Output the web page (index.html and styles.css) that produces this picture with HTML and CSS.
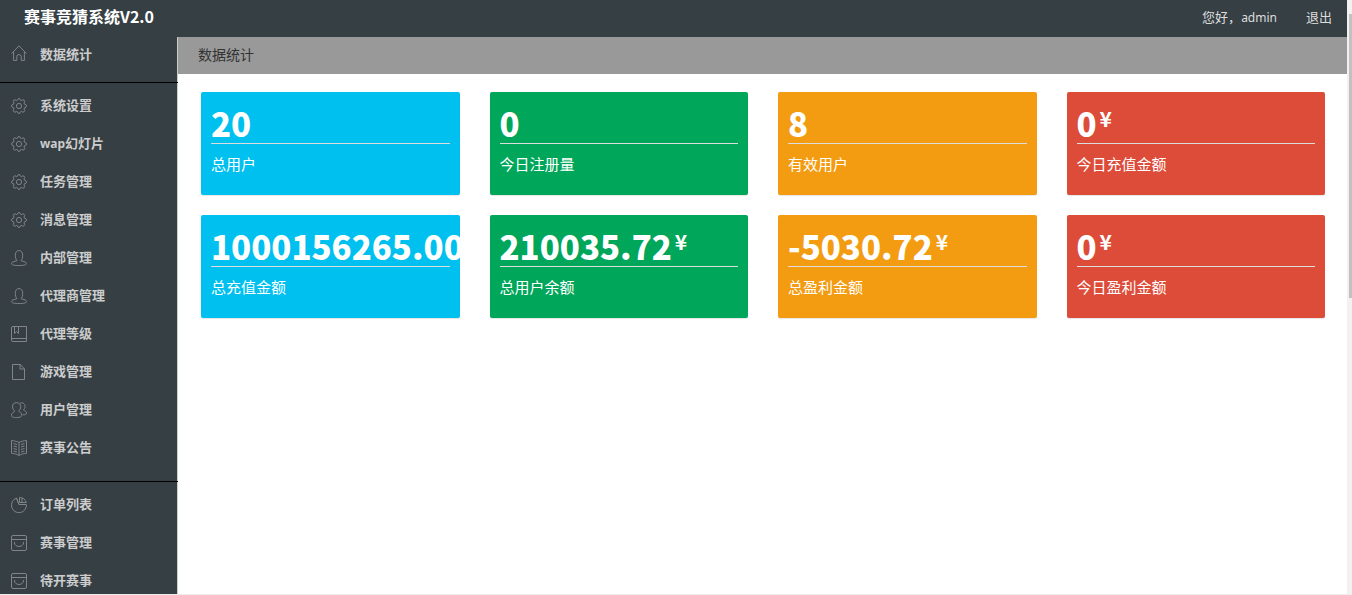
FILE: index.html
```html
<!DOCTYPE html>
<html lang="zh-CN">
<head>
<meta charset="utf-8">
<title>赛事竞猜系统V2.0</title>
<link rel="stylesheet" href="styles.css">
</head>
<body>
<svg class="symbols" aria-hidden="true">
  <symbol id="home" viewBox="0 0 16 16"><path d="M.6 8.600 8 .8l7.400 7.800M2.600 7v8.400h3.200v-4.200Q5.800 9.600 8 9.600t2.200 1.600v4.200h3.200V7"/></symbol>
  <symbol id="gear" viewBox="0 0 16 16"><circle cx="8" cy="8" r="2.600"/><path d="M6.500 2.200Q6.700.5 8 .5t1.500 1.700l.8.4q1.800-1.400 2.900-.3t-.2 2.700l.5 1.200Q15.500 6.500 15.500 8t-2 1.700l-.5 1.300q1.300 1.600.2 2.700t-2.900-.3l-.8.4Q9.300 15.500 8 15.500t-1.500-1.700l-.8-.4q-1.800 1.400-2.900.3T3 11l-.5-1.300Q.5 9.500.5 8t2-1.800L3 5Q1.700 3.400 2.800 2.300t2.900.3z"/></symbol>
  <symbol id="user" viewBox="0 0 16 16"><path d="M6 10.500C4.800 9.500 4.300 7.500 4.300 5.200 4.300 2.300 5.700.6 8 .6s3.700 1.700 3.700 4.600c0 2.300-.5 4.300-1.700 5.300.6 1 5.500.6 5.500 3.200 0 1.300-3 1.800-7.500 1.800S.5 15 .5 13.700c0-2.600 4.900-2.200 5.500-3.200z"/></symbol>
  <symbol id="book" viewBox="0 0 16 16"><path d="M2 .5h13.500v15H2Q.5 15.500.5 14V2Q.5.500 2 .500zM.5 12.500h15M3.500 .500v7l2-2 2 2V.500"/></symbol>
  <symbol id="file" viewBox="0 0 16 16"><path d="M1.500.5h8l4 4.500v10.500h-12zM9 .500V5h4.500"/></symbol>
  <symbol id="users" viewBox="0 0 16 16"><path d="M3.800 9C2.300 8 1.500 6.500 1.500 4.700 1.500 2.200 3.100.6 5.500.6s4.200 1.600 4.200 4.200C9.700 6.600 9 8 7.600 9c.8 1 3 1.500 3 4 0 1.800-1.200 2.500-5 2.500S.5 15 .5 13.200C.5 10.800 3 10 3.800 9zM9 1.300c2.300-1.400 5 .2 5 3 0 1.900-.7 2.700-1.600 3.600 1.200.7 3.100 1.300 3.100 3.400 0 1.200-1.300 1.500-4 1.500"/></symbol>
  <symbol id="news" viewBox="0 0 16 16"><path d="M8 2.500C6 1.200 3.500 1 .5.500v12.800c3 .2 5.500.8 7.500 2.200 2-1.400 4.500-2 7.500-2.200V.500c-3 .500-5.500.700-7.500 2zM8 2.500v13M2.500 3.500l3.500 1M2.500 6l3.500 1M2.500 8.500l3.500 1M2.500 11l3.500 1M13.500 3.500l-3.500 1M13.500 6l-3.500 1M13.500 8.500l-3.500 1M13.500 11l-3.500 1"/></symbol>
  <symbol id="pie" viewBox="0 0 16 16"><path d="M5.500 1.100A7.500 7.500 0 1 0 15.400 7.500H8zM5.500 1.100 8 7.500M8.500 5V.500c3.500 0 6 2 6.800 5H8.500zM11 1v4.500"/></symbol>
  <symbol id="bag" viewBox="0 0 16 16"><path d="M2 .500h12q1.500 0 1.500 1.500v12q0 1.500-1.500 1.500H2Q.5 15.500.5 14V2Q.5.500 2 .500zM.5 4.500h15M3.500 7v1c0 1.800 2 3.500 4.500 3.500s4.500-1.700 4.500-3.500V7"/></symbol>
</svg>
<header class="header">
  <h1 class="brand">赛事竞猜系统V2.0</h1>
  <span class="greeting">您好，<span class="name">admin</span></span>
  <a class="logout" href="#">退出</a>
</header>
<div class="scrollbar" aria-hidden="true"><div class="thumb"></div></div>
<nav class="sidebar">
  <ul class="group first">
    <li><a href="#"><svg class="icon"><use href="#home"/></svg>数据统计</a></li>
  </ul>
  <ul class="group">
    <li><a href="#"><svg class="icon"><use href="#gear"/></svg>系统设置</a></li>
    <li><a href="#"><svg class="icon"><use href="#gear"/></svg><span><span class="name">wap</span>幻灯片</span></a></li>
    <li><a href="#"><svg class="icon"><use href="#gear"/></svg>任务管理</a></li>
    <li><a href="#"><svg class="icon"><use href="#gear"/></svg>消息管理</a></li>
    <li><a href="#"><svg class="icon"><use href="#user"/></svg>内部管理</a></li>
    <li><a href="#"><svg class="icon"><use href="#user"/></svg>代理商管理</a></li>
    <li><a href="#"><svg class="icon"><use href="#book"/></svg>代理等级</a></li>
    <li><a href="#"><svg class="icon"><use href="#file"/></svg>游戏管理</a></li>
    <li><a href="#"><svg class="icon"><use href="#users"/></svg>用户管理</a></li>
    <li><a href="#"><svg class="icon"><use href="#news"/></svg>赛事公告</a></li>
  </ul>
  <ul class="group">
    <li><a href="#"><svg class="icon"><use href="#pie"/></svg>订单列表</a></li>
    <li><a href="#"><svg class="icon"><use href="#bag"/></svg>赛事管理</a></li>
    <li><a href="#"><svg class="icon"><use href="#bag"/></svg>待开赛事</a></li>
  </ul>
</nav>
<main class="main">
  <h2 class="title">数据统计</h2>
  <div class="cards">
    <section class="card blue"><p class="value">20</p><p class="label">总用户</p></section>
    <section class="card green"><p class="value">0</p><p class="label">今日注册量</p></section>
    <section class="card orange"><p class="value">8</p><p class="label">有效用户</p></section>
    <section class="card red"><p class="value">0<sup>¥</sup></p><p class="label">今日充值金额</p></section>
    <section class="card blue"><p class="value">1000156265.00<sup>¥</sup></p><p class="label">总充值金额</p></section>
    <section class="card green"><p class="value">210035.72<sup>¥</sup></p><p class="label">总用户余额</p></section>
    <section class="card orange"><p class="value">-5030.72<sup>¥</sup></p><p class="label">总盈利金额</p></section>
    <section class="card red"><p class="value">0<sup>¥</sup></p><p class="label">今日盈利金额</p></section>
  </div>
</main>
</body>
</html>
```
FILE: styles.css
```css
* { box-sizing: border-box; margin: 0; padding: 0; }
body {
  display: grid;
  grid-template: auto minmax(0, 1fr) / 178px minmax(0, 1fr) 5px;
  height: 100vh;
  overflow: hidden;
  border-bottom: 1px solid #eee;
  background: #fff;
  font-family: "Noto Sans", "Noto Sans CJK SC", sans-serif;
  font-size: 13px;
}
a { color: inherit; text-decoration: none; }
.symbols { display: none; }
.header {
  grid-column: 1 / 3;
  display: flex;
  align-items: center;
  height: 37px;
  padding: 0 15px 5px 24px;
  background: #353f44;
  color: #ddd;
}
.brand {
  margin-right: auto;
  color: #fff;
  font: bold 16px/24px "Noto Sans CJK SC", sans-serif;
}
.greeting { margin-right: 29px; }
.name { font-size: 12px; }
.scrollbar {
  grid-area: 1 / 3 / 3 / 4;
  padding: 14px 0 0 2px;
  background: #f1f1f1;
}
.thumb { height: 49%; background: #c1c1c1; }
.sidebar {
  overflow: hidden;
  background: linear-gradient(to left, #ccc 1px, #353f44 1px);
}
.group {
  padding: 3px 0 15px;
  border-top: 1px solid #000;
  list-style: none;
}
.group a {
  display: flex;
  align-items: center;
  gap: 13px;
  height: 38px;
  padding: 0 0 2px 11px;
  color: #ccc;
  font-weight: bold;
}
.icon {
  width: 16px;
  height: 20px;
  padding-top: 4px;
  fill: none;
  stroke: #828586;
  stroke-width: 1;
}
.first { padding: 0 0 11px; border: 0; }
.group.first a { height: 34px; }
.first .icon { height: 16px; padding: 0; }
.title {
  height: 37px;
  padding-left: 20px;
  background: #999;
  color: #333;
  font-size: 14px;
  font-weight: normal;
  line-height: 36px;
}
.cards {
  display: grid;
  grid-template-columns: repeat(4, minmax(0, 1fr));
  gap: 20px 30px;
  padding: 18px 22px 0 23px;
}
.card {
  overflow: hidden;
  padding: 10px 10px 21px;
  border-radius: 2px;
  box-shadow: 0 1px 1px rgba(0, 0, 0, .1);
  color: #fff;
}
.value {
  height: 42px;
  border-bottom: 1px solid #ddd;
  font: 900 33px/42px "Noto Sans CJK SC", sans-serif;
  white-space: nowrap;
}
.value sup {
  margin-left: 3px;
  font-size: 21px;
  font-weight: bold;
  line-height: 0;
  vertical-align: 10px;
}
.label { padding-top: 10px; font-size: 15px; line-height: 20px; }
.blue { background: #00c0ef; }
.green { background: #00a65a; }
.orange { background: #f39c12; }
.red { background: #dd4b39; }
```
